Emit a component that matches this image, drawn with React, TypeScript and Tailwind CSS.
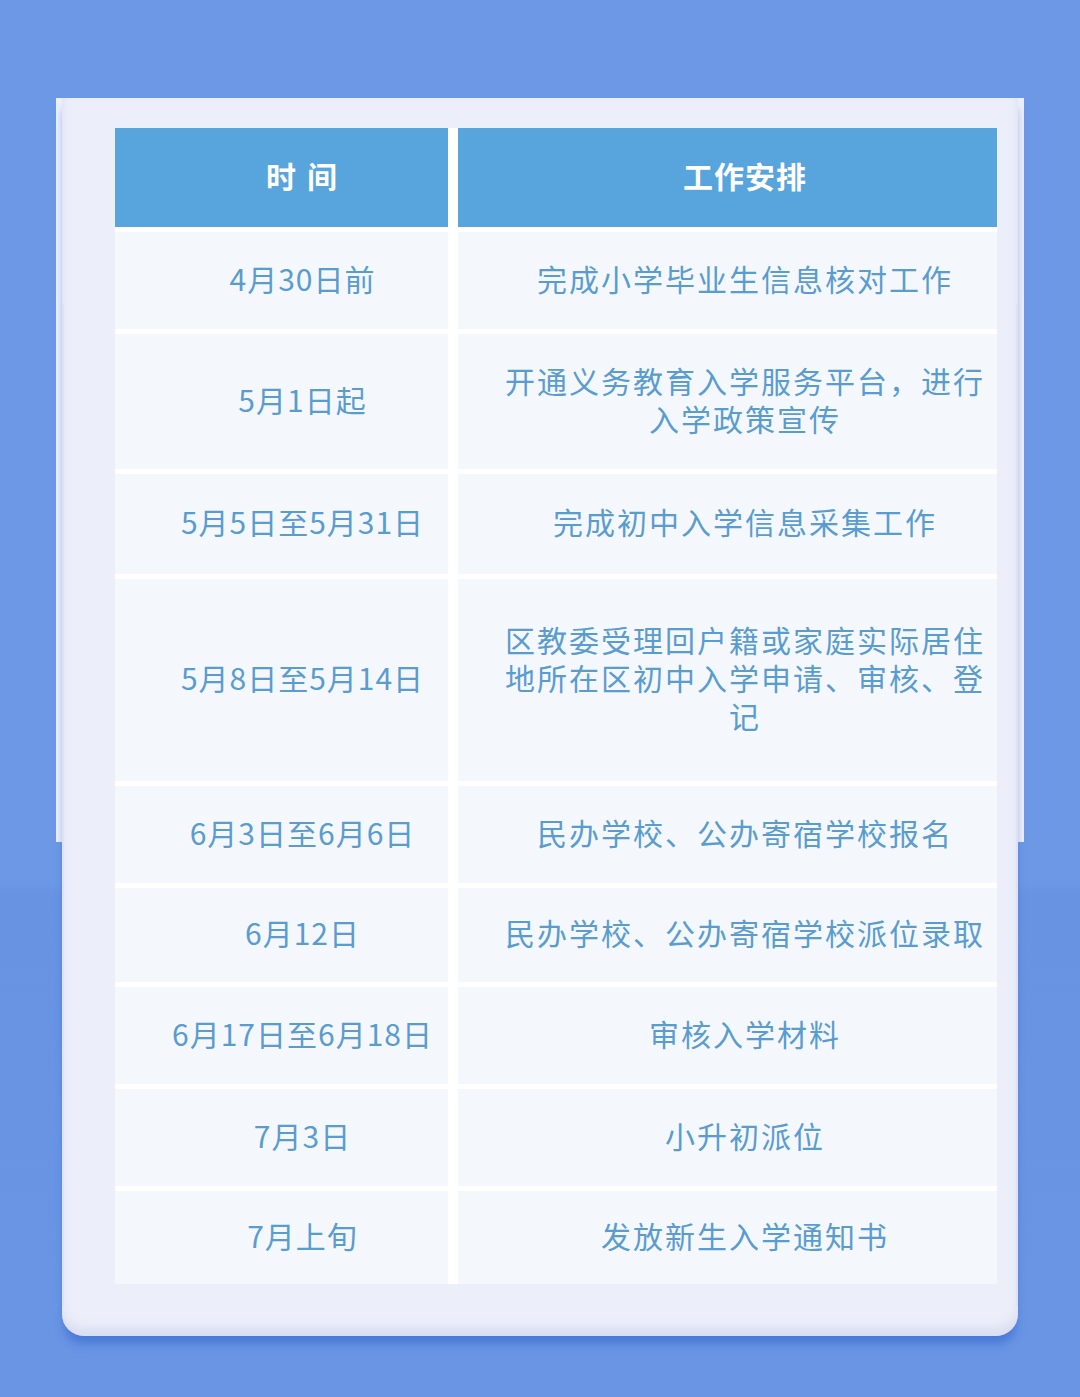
import React from "react";

const rows: { t: string; w: string; h: number }[] = [
  { t: "4月30日前", w: "完成小学毕业生信息核对工作", h: 97 },
  { t: "5月1日起", w: "开通义务教育入学服务平台，进行入学政策宣传", h: 135 },
  { t: "5月5日至5月31日", w: "完成初中入学信息采集工作", h: 100 },
  { t: "5月8日至5月14日", w: "区教委受理回户籍或家庭实际居住地所在区初中入学申请、审核、登记", h: 202 },
  { t: "6月3日至6月6日", w: "民办学校、公办寄宿学校报名", h: 97 },
  { t: "6月12日", w: "民办学校、公办寄宿学校派位录取", h: 94 },
  { t: "6月17日至6月18日", w: "审核入学材料", h: 97 },
  { t: "7月3日", w: "小升初派位", h: 97 },
  { t: "7月上旬", w: "发放新生入学通知书", h: 93 },
];

export default function App() {
  return (
    <div
      className="w-[1080px] h-[1397px] overflow-hidden bg-[linear-gradient(180deg,#6c98e5_0%,#6c98e5_63%,#6893e3_64%,#6995e4_100%)] pt-[98px]"
      style={{ fontFamily: '"Noto Sans CJK SC", "Noto Sans", sans-serif' }}
    >
      <div className="relative ml-[56px] w-[968px]">
        {/* back panel */}
        <div className="absolute left-0 top-0 w-[968px] h-[744px] bg-[#eceefa]" />
        {/* front panel */}
        <div className="relative mx-[6px] w-[956px] bg-[#eceefa] rounded-b-[22px] pt-[30px] pb-[52px] pl-[53px] pr-[21px] shadow-[0_10px_8px_-2px_rgba(50,100,205,0.55),inset_0_-8px_10px_rgba(205,210,235,0.6)]">
          {/* faint side edges of the front panel */}
          <div className="absolute left-0 top-[205px] bottom-[30px] w-[2px] bg-[#dfe2f4]" />
          <div className="absolute right-0 top-[205px] bottom-[30px] w-[2px] bg-[#dfe2f4]" />
          <div className="relative grid grid-cols-[333px_539px] gap-x-[10px] gap-y-[5px] bg-white">
            <div className="h-[99px] bg-[#58a4dc] flex items-center justify-center pl-[42px] pb-[4px] text-white text-[30px] font-bold tracking-[2px]">
              时 间
            </div>
            <div className="h-[99px] bg-[#58a4dc] flex items-center justify-center pl-[46px] pr-[11px] pb-[4px] text-white text-[30px] font-bold tracking-[1px]">
              工作安排
            </div>
            {rows.map((r, i) => (
              <React.Fragment key={i}>
                <div
                  className="bg-[#f4f8fd] flex items-center justify-center pl-[42px] pb-[6px] text-[#5b9cce] text-[30px] tracking-[1px] leading-[38px]"
                  style={{ height: r.h }}
                >
                  {r.t}
                </div>
                <div
                  className="bg-[#f4f8fd] flex items-center justify-center pl-[45px] pr-[10px] pb-[6px] text-[#5b9cce] text-[30px] tracking-[2px] leading-[38px] text-center"
                  style={{ height: r.h }}
                >
                  <span>{r.w}</span>
                </div>
              </React.Fragment>
            ))}
          </div>
        </div>
      </div>
    </div>
  );
}
